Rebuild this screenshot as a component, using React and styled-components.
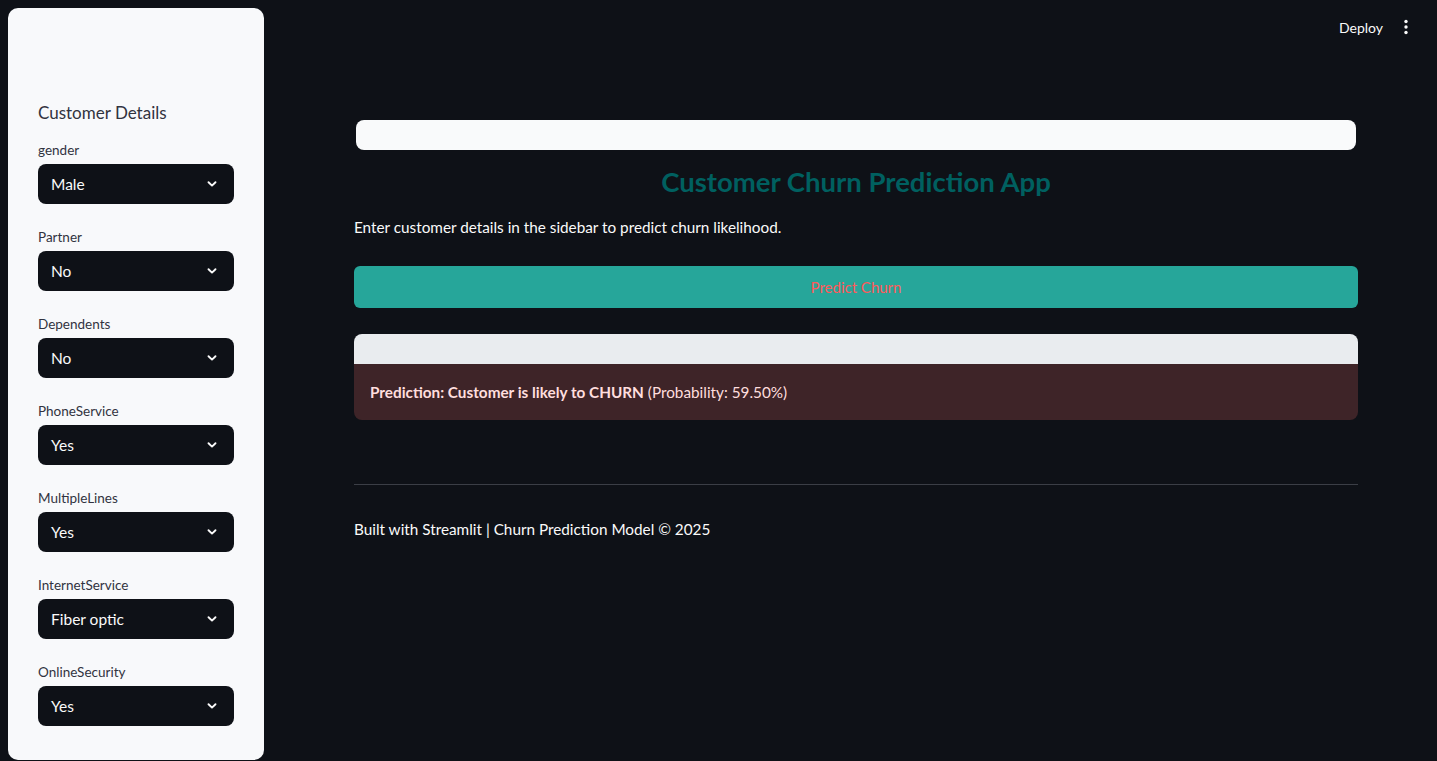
import styled, { createGlobalStyle } from 'styled-components';

const GlobalStyle = createGlobalStyle`
    html, body {
        margin: 0;
        padding: 0;
        background: #0e1117;
        font-family: Lato, "Noto Sans", sans-serif;
    }
    * {
        box-sizing: border-box;
    }
`;

const fields = [
    { label: 'gender', value: 'Male' },
    { label: 'Partner', value: 'No' },
    { label: 'Dependents', value: 'No' },
    { label: 'PhoneService', value: 'Yes' },
    { label: 'MultipleLines', value: 'Yes' },
    { label: 'InternetService', value: 'Fiber optic' },
    { label: 'OnlineSecurity', value: 'Yes' },
];

const Chevron = () => (
    <svg width="12" height="12" viewBox="0 0 12 12">
        <path
            d="M2.5 4.2 L6 7.6 L9.5 4.2"
            fill="none"
            stroke="#fafafa"
            strokeWidth="1.9"
            strokeLinecap="round"
            strokeLinejoin="round"
        />
    </svg>
);

const Kebab = () => (
    <svg width="4" height="16" viewBox="0 0 4 16">
        <circle cx="2" cy="2.5" r="1.7" fill="#fafafa" />
        <circle cx="2" cy="8" r="1.7" fill="#fafafa" />
        <circle cx="2" cy="13.5" r="1.7" fill="#fafafa" />
    </svg>
);

const App = () => {
    return (
        <>
            <GlobalStyle />
            <Page>
                <Sidebar>
                    <SidebarTitle>Customer Details</SidebarTitle>
                    {fields.map((field) => (
                        <Field key={field.label}>
                            <Label>{field.label}</Label>
                            <Select>
                                <span>{field.value}</span>
                                <Chevron />
                            </Select>
                        </Field>
                    ))}
                </Sidebar>
                <Main>
                    <Header>
                        <DeployButton>Deploy</DeployButton>
                        <MenuButton>
                            <Kebab />
                        </MenuButton>
                    </Header>
                    <Content>
                        <BlankBar />
                        <Title>Customer Churn Prediction App</Title>
                        <Intro>
                            Enter customer details in the sidebar to predict
                            churn likelihood.
                        </Intro>
                        <PredictButton>Predict Churn</PredictButton>
                        <ResultGroup>
                            <ResultBar />
                            <ErrorBox>
                                <strong>
                                    Prediction: Customer is likely to CHURN
                                </strong>
                                {' (Probability: 59.50%)'}
                            </ErrorBox>
                        </ResultGroup>
                        <Divider />
                        <Footer>
                            Built with Streamlit | Churn Prediction Model ©
                            2025
                        </Footer>
                    </Content>
                </Main>
            </Page>
        </>
    );
};

export default App;

const Page = styled.div`
    display: flex;
    height: 761px;
    padding: 8px 0 1px 8px;
    overflow: hidden;
`;

const Sidebar = styled.aside`
    flex: 0 0 256px;
    display: flex;
    flex-direction: column;
    background: #f8f9fb;
    border-radius: 10px;
    padding: 93px 30px 0 30px;
`;

const SidebarTitle = styled.h3`
    margin: 0 0 16px 0;
    font-size: 17px;
    font-weight: 400;
    color: #31333f;
    line-height: 24px;
`;

const Field = styled.div`
    display: flex;
    flex-direction: column;
    margin-bottom: 24px;
`;

const Label = styled.label`
    font-size: 13.5px;
    color: #31333f;
    line-height: 18px;
    margin-bottom: 5px;
`;

const Select = styled.div`
    display: flex;
    align-items: center;
    justify-content: space-between;
    width: 196px;
    height: 40px;
    padding: 0 16px 0 13px;
    background: #0e1117;
    border-radius: 8px;
    color: #fafafa;
    font-size: 15.5px;
`;

const Main = styled.main`
    flex: 1;
    display: flex;
    flex-direction: column;
`;

const Header = styled.header`
    display: flex;
    justify-content: flex-end;
    align-items: center;
    height: 38px;
    padding-right: 29px;
    gap: 21px;
`;

const DeployButton = styled.span`
    color: #fafafa;
    font-size: 14px;
`;

const MenuButton = styled.span`
    display: flex;
    align-items: center;
`;

const Content = styled.div`
    display: flex;
    flex-direction: column;
    width: 1004px;
    margin: 74px 0 0 90px;
`;

const BlankBar = styled.div`
    height: 30px;
    margin: 0 2px;
    background: #f9fafb;
    border-radius: 8px;
`;

const Title = styled.h1`
    margin: 16px 0 0 0;
    text-align: center;
    font-size: 27.5px;
    line-height: 32px;
    font-weight: 700;
    color: #006060;
`;

const Intro = styled.p`
    margin: 17px 0 0 0;
    font-size: 15.3px;
    line-height: 24px;
    color: #fafafa;
`;

const PredictButton = styled.button`
    margin-top: 27px;
    height: 42px;
    border: none;
    border-radius: 6px;
    background: #26a69a;
    color: #ff5a5a;
    font-family: inherit;
    font-size: 15px;
`;

const ResultGroup = styled.div`
    display: flex;
    flex-direction: column;
    margin-top: 26px;
`;

const ResultBar = styled.div`
    height: 30px;
    background: #e9ecef;
    border-radius: 8px 8px 0 0;
`;

const ErrorBox = styled.div`
    height: 56px;
    padding: 16px 16px 0 16px;
    line-height: 24px;
    background: #3e2428;
    border-radius: 0 0 8px 8px;
    color: #ffdede;
    font-size: 15.3px;

    strong {
        font-weight: 700;
    }
`;

const Divider = styled.hr`
    margin: 64px 0 0 0;
    border: none;
    border-top: 1px solid #3b3e46;
`;

const Footer = styled.p`
    margin: 32px 0 0 0;
    font-size: 15.3px;
    line-height: 24px;
    color: #fafafa;
`;
